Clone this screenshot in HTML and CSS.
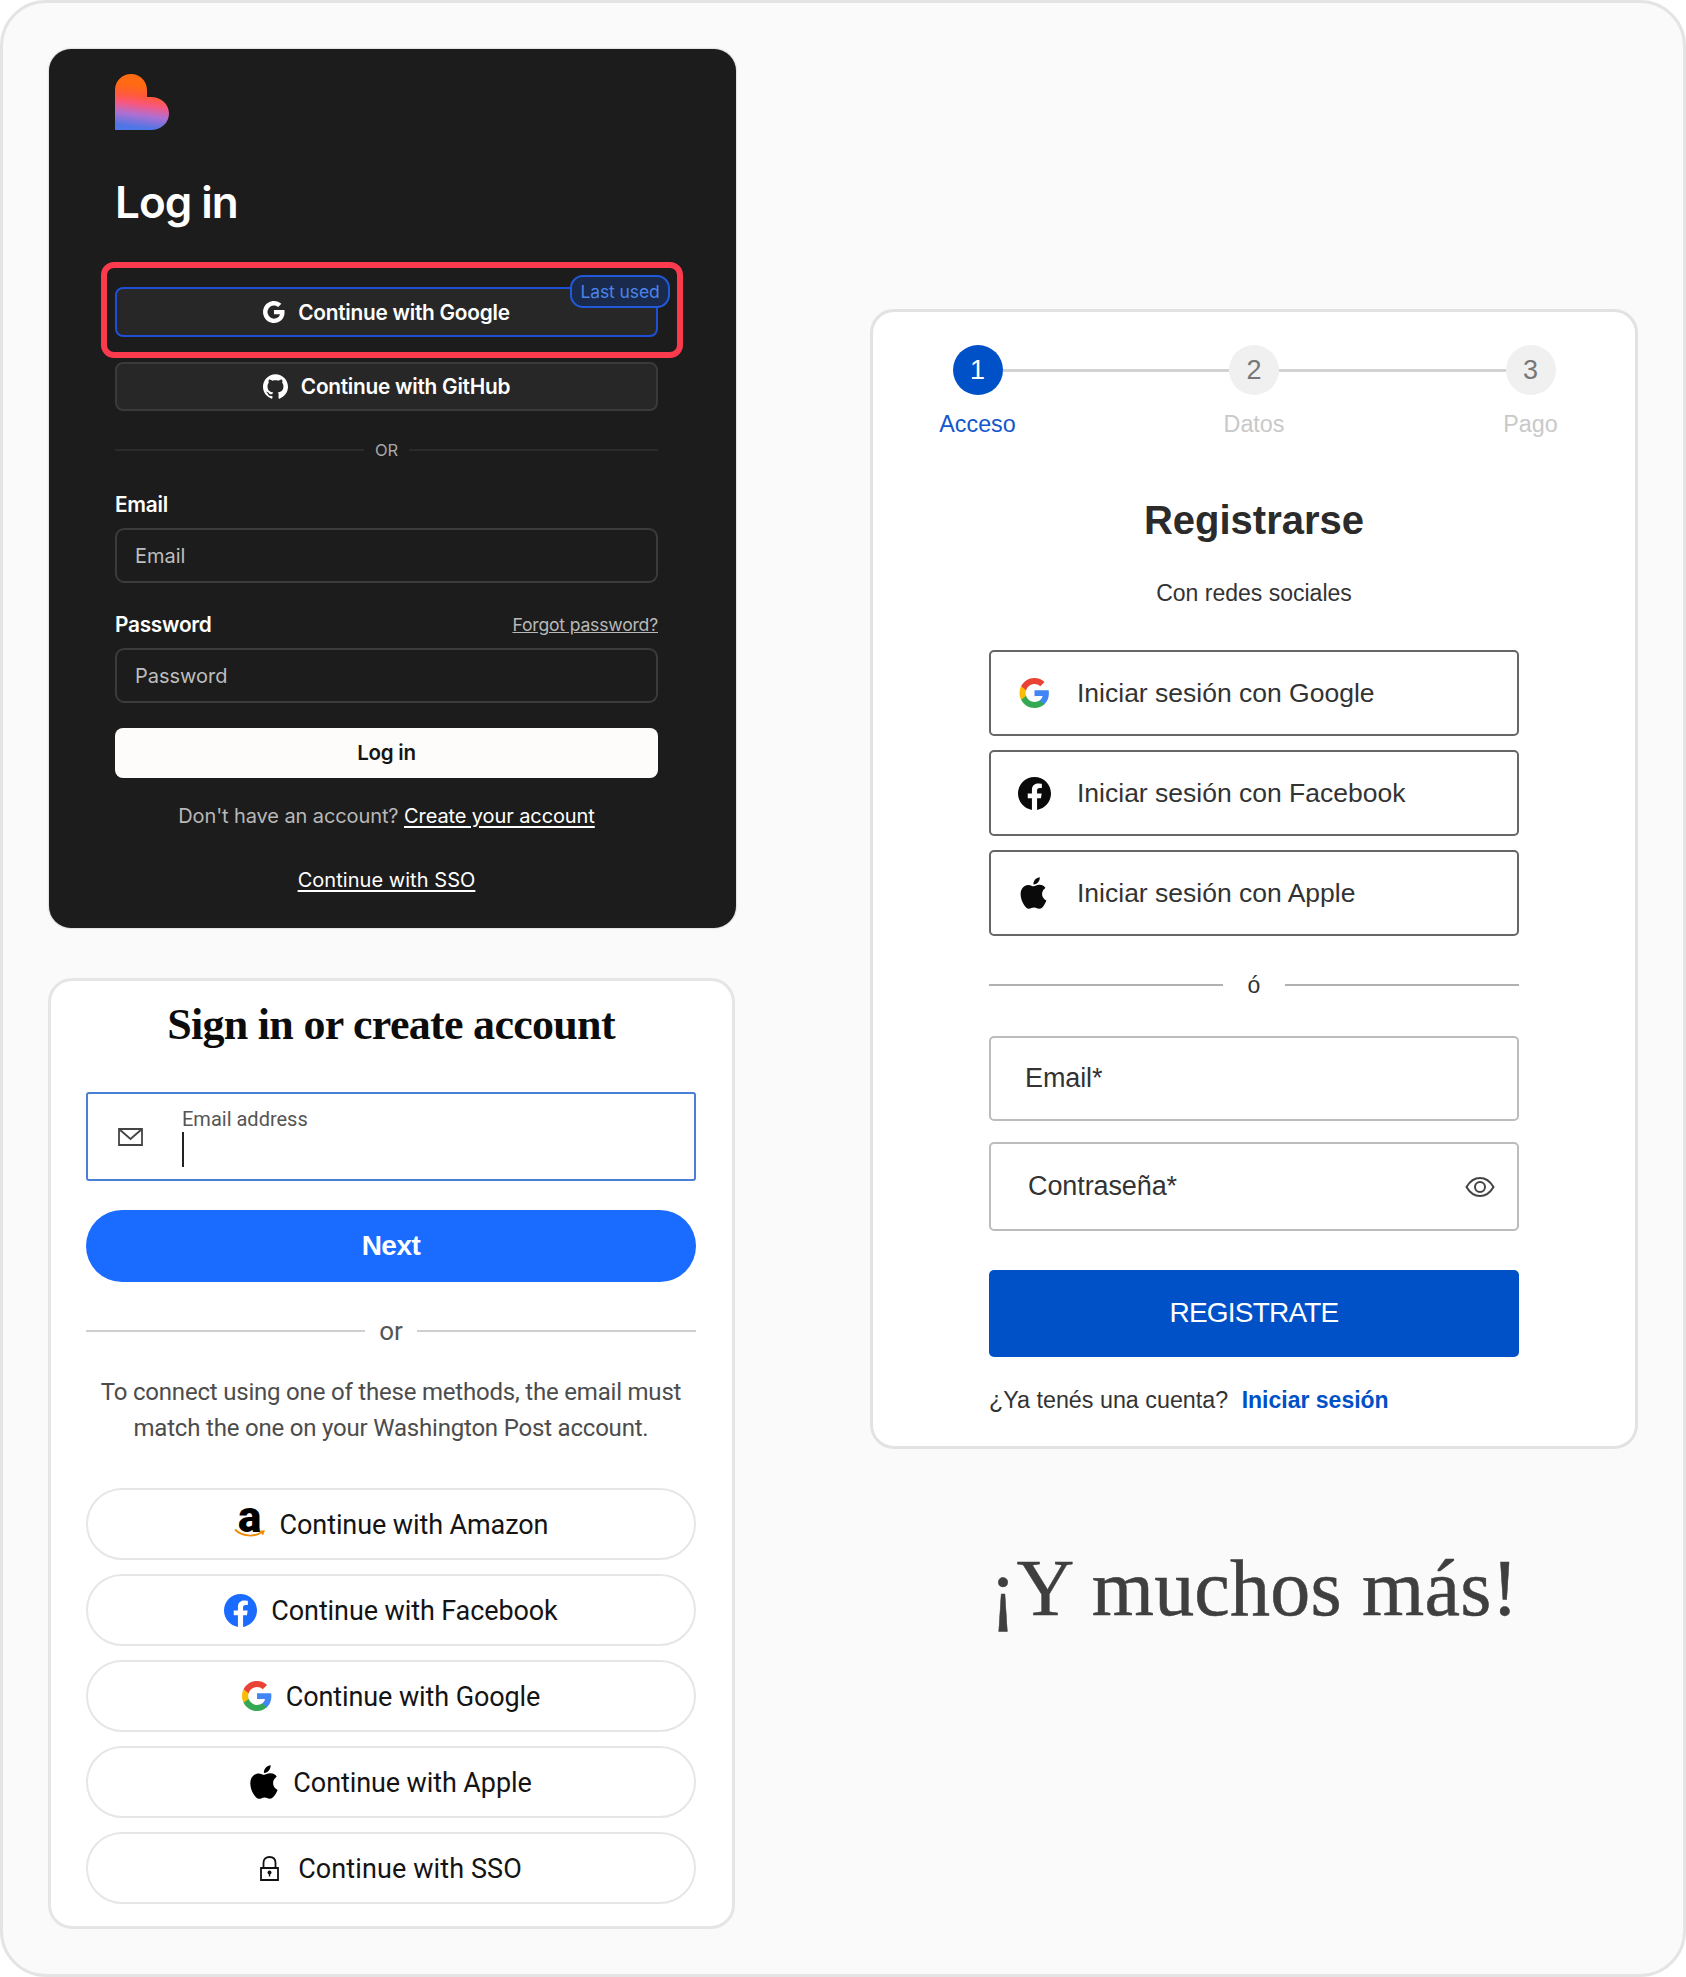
FILE: index.html
```html
<!DOCTYPE html>
<html lang="es">
<head>
<meta charset="utf-8">
<title>Login screens</title>
<link rel="stylesheet" href="styles.css">
</head>
<body>
<svg class="defs" width="0" height="0" aria-hidden="true">
  <defs>
    <linearGradient id="heart" x1="0.56" y1="0.22" x2="0.46" y2="1">
      <stop offset="0" stop-color="#ff6a13"/>
      <stop offset="0.24" stop-color="#ff5a3c"/>
      <stop offset="0.42" stop-color="#f9577e"/>
      <stop offset="0.66" stop-color="#b06fd0"/>
      <stop offset="0.95" stop-color="#4d76e6"/>
    </linearGradient>
    <symbol id="g-color" viewBox="1 1 22 22">
      <path fill="#4285F4" d="M22.56 12.25c0-.78-.07-1.53-.2-2.25H12v4.26h5.92c-.26 1.37-1.04 2.53-2.21 3.31v2.77h3.57c2.08-1.92 3.28-4.74 3.28-8.09z"/>
      <path fill="#34A853" d="M12 23c2.97 0 5.46-.98 7.28-2.66l-3.57-2.77c-.98.66-2.23 1.06-3.71 1.06-2.86 0-5.29-1.93-6.16-4.53H2.18v2.84C3.99 20.53 7.7 23 12 23z"/>
      <path fill="#FBBC05" d="M5.84 14.09c-.22-.66-.35-1.36-.35-2.09s.13-1.43.35-2.09V7.07H2.18C1.43 8.55 1 10.22 1 12s.43 3.45 1.18 4.93l2.85-2.22.81-.62z"/>
      <path fill="#EA4335" d="M12 5.38c1.62 0 3.06.56 4.21 1.64l3.15-3.15C17.45 2.09 14.97 1 12 1 7.7 1 3.99 3.47 2.18 7.07l3.66 2.84c.87-2.6 3.3-4.53 6.16-4.53z"/>
    </symbol>
    <symbol id="fb" viewBox="0 0 24 24">
      <path d="M24 12.073c0-6.627-5.373-12-12-12s-12 5.373-12 12c0 5.99 4.388 10.954 10.125 11.854v-8.385H7.078v-3.47h3.047V9.43c0-3.007 1.792-4.669 4.533-4.669 1.312 0 2.686.235 2.686.235v2.953H15.83c-1.491 0-1.956.925-1.956 1.874v2.25h3.328l-.532 3.47h-2.796v8.385C19.612 23.027 24 18.062 24 12.073z"/>
    </symbol>
    <symbol id="apple" viewBox="3.7 1.9 17.2 20.2">
      <path d="M18.71 19.5c-.83 1.24-1.71 2.45-3.05 2.47-1.34.03-1.77-.79-3.29-.79-1.53 0-2 .77-3.27.82-1.31.05-2.3-1.32-3.14-2.53C4.25 17 2.94 12.45 4.7 9.39c.87-1.52 2.43-2.48 4.12-2.51 1.28-.02 2.5.87 3.29.87.78 0 2.26-1.07 3.81-.91.65.03 2.47.26 3.64 1.98-.09.06-2.17 1.28-2.15 3.81.03 3.02 2.65 4.03 2.68 4.04-.03.07-.42 1.44-1.38 2.83M13 3.5c.73-.83 1.94-1.46 2.94-1.5.13 1.17-.34 2.35-1.04 3.19-.69.85-1.83 1.51-2.95 1.42-.15-1.15.41-2.35 1.05-3.11z"/>
    </symbol>
  </defs>
</svg>

<main class="frame">
  <div class="col-left">
    <section class="card-dark">
      <svg class="heart" viewBox="0 0 54 56" aria-hidden="true">
        <path fill="url(#heart)" d="M0 56V16C0 7 7 0 16 0S32 7 32 16V23H36C46 23 54 30 54 39.500C54 49 46 56 36 56Z"/>
      </svg>
      <h1 class="dark-title">Log in</h1>
      <div class="google-wrap">
        <div class="highlight"></div>
        <button class="dark-btn dark-btn-active">
          <svg class="ico-g-white" viewBox="1 1 22 22" aria-hidden="true"><path d="M22.56 12.25c0-.78-.07-1.53-.2-2.25H12v4.260h5.920c-.26 1.370-1.040 2.530-2.210 3.310v2.770h3.570c2.080-1.920 3.280-4.740 3.280-8.090zM12 23c2.970 0 5.460-.98 7.280-2.660l-3.570-2.770c-.98.660-2.230 1.060-3.710 1.060-2.860 0-5.290-1.930-6.160-4.530H2.180v2.840C3.990 20.530 7.700 23 12 23zM5.840 14.090c-.22-.66-.35-1.360-.35-2.090s.13-1.430.35-2.090V7.070H2.180C1.430 8.550 1 10.220 1 12s.43 3.450 1.180 4.930l2.850-2.220.81-.62zM12 5.380c1.620 0 3.060.56 4.210 1.640l3.150-3.150C17.450 2.090 14.970 1 12 1 7.700 1 3.990 3.470 2.180 7.070l3.660 2.840c.87-2.600 3.300-4.530 6.160-4.530z"/></svg>
          <span>Continue with Google</span>
        </button>
        <span class="badge">Last used</span>
      </div>
      <button class="dark-btn dark-btn-github">
        <svg class="ico-gh" viewBox="0 0 24 24" aria-hidden="true"><path d="M12 .297c-6.630 0-12 5.373-12 12 0 5.303 3.438 9.800 8.205 11.385.6.113.82-.258.82-.577 0-.285-.01-1.040-.015-2.040-3.338.724-4.042-1.610-4.042-1.610C4.422 18.070 3.633 17.700 3.633 17.700c-1.087-.744.084-.729.084-.729 1.205.084 1.838 1.236 1.838 1.236 1.070 1.835 2.809 1.305 3.495.998.108-.776.417-1.305.76-1.605-2.665-.3-5.466-1.332-5.466-5.930 0-1.310.465-2.380 1.235-3.220-.135-.303-.54-1.523.105-3.176 0 0 1.005-.322 3.300 1.230.96-.267 1.980-.399 3-.405 1.020.006 2.040.138 3 .405 2.280-1.552 3.285-1.230 3.285-1.230.645 1.653.24 2.873.12 3.176.765.840 1.230 1.910 1.230 3.220 0 4.610-2.805 5.625-5.475 5.920.42.36.81 1.096.81 2.220 0 1.606-.015 2.896-.015 3.286 0 .315.21.69.825.57C20.565 22.092 24 17.592 24 12.297c0-6.627-5.373-12-12-12"/></svg>
        <span>Continue with GitHub</span>
      </button>
      <div class="dark-or"><span>OR</span></div>
      <label class="dark-label dark-label-email">Email</label>
      <div class="dark-input">Email</div>
      <div class="dark-label-row">
        <label class="dark-label">Password</label>
        <a class="forgot">Forgot password?</a>
      </div>
      <div class="dark-input dark-input-pass">Password</div>
      <button class="dark-login">Log in</button>
      <p class="dark-signup">Don't have an account? <a>Create your account</a></p>
      <p class="dark-sso"><a>Continue with SSO</a></p>
    </section>

    <section class="card-wapo">
      <h2 class="wapo-title">Sign in or create account</h2>
      <div class="wapo-input">
        <svg class="ico-mail" viewBox="0 0 25 18" aria-hidden="true"><path d="M1 1H24V17H1ZM1 1L12.500 11L24 1"/></svg>
        <div class="wapo-field">
          <span class="wapo-field-label">Email address</span>
          <span class="caret"></span>
        </div>
      </div>
      <button class="wapo-next">Next</button>
      <div class="wapo-or"><span>or</span></div>
      <p class="wapo-note">To connect using one of these methods, the email must<br>match the one on your Washington Post account.</p>
      <div class="wapo-list">
        <button class="wapo-btn">
          <span class="amazon">
            <span class="amazon-a">a</span>
            <svg class="amazon-smile" viewBox="0 0 32 12" aria-hidden="true">
              <path d="M1 1.500C8 8.500 20 9.500 28 4" fill="none" stroke="#f08a00" stroke-width="1.800"/>
              <path d="M25.500 2.800L31 2.200L29 7.500Z" fill="#f08a00"/>
            </svg>
          </span>
          <span class="wapo-btn-text">Continue with Amazon</span>
        </button>
        <button class="wapo-btn">
          <svg class="ico-wapo-fb" aria-hidden="true"><use href="#fb"/></svg>
          <span class="wapo-btn-text">Continue with Facebook</span>
        </button>
        <button class="wapo-btn">
          <svg class="ico-wapo-g" aria-hidden="true"><use href="#g-color"/></svg>
          <span class="wapo-btn-text">Continue with Google</span>
        </button>
        <button class="wapo-btn">
          <svg class="ico-wapo-apple" aria-hidden="true"><use href="#apple"/></svg>
          <span class="wapo-btn-text">Continue with Apple</span>
        </button>
        <button class="wapo-btn">
          <svg class="ico-lock" viewBox="0 0 19 25" aria-hidden="true">
            <path class="lock-line" d="M1 12H18V24H1ZM3.500 12V7C3.500 3 6 1 9.500 1S15.500 3 15.500 7V12"/>
            <circle cx="9.500" cy="16.500" r="2"/>
            <path d="M8.800 17H10.200V20.500H8.800Z"/>
          </svg>
          <span class="wapo-btn-text wapo-btn-sso">Continue with SSO</span>
        </button>
      </div>
    </section>
  </div>

  <div class="col-right">
    <section class="card-reg">
      <div class="stepper">
        <div class="step step-on"><span class="step-dot">1</span><span class="step-name">Acceso</span></div>
        <div class="connector"></div>
        <div class="step"><span class="step-dot">2</span><span class="step-name">Datos</span></div>
        <div class="connector"></div>
        <div class="step"><span class="step-dot">3</span><span class="step-name">Pago</span></div>
      </div>
      <h2 class="reg-title">Registrarse</h2>
      <p class="reg-sub">Con redes sociales</p>
      <div class="reg-form">
        <div class="reg-social">
          <button class="reg-btn"><span class="reg-ico"><svg class="ico-reg-g" aria-hidden="true"><use href="#g-color"/></svg></span><span>Iniciar sesión con Google</span></button>
          <button class="reg-btn"><span class="reg-ico"><svg class="ico-reg-fb" aria-hidden="true"><use href="#fb"/></svg></span><span>Iniciar sesión con Facebook</span></button>
          <button class="reg-btn"><span class="reg-ico"><svg class="ico-reg-apple" aria-hidden="true"><use href="#apple"/></svg></span><span>Iniciar sesión con Apple</span></button>
        </div>
        <div class="reg-or"><span>ó</span></div>
        <div class="reg-input reg-input-email">Email*</div>
        <div class="reg-input reg-input-pass">
          <span>Contraseña*</span>
          <svg class="ico-eye" viewBox="0 0 30 22" aria-hidden="true"><path d="M1.500 11C5 5 9.500 2 15 2S25 5 28.500 11C25 17 20.500 20 15 20S5 17 1.500 11Z"/><circle cx="15" cy="11" r="5"/></svg>
        </div>
        <button class="reg-submit">REGISTRATE</button>
        <p class="reg-foot">¿Ya tenés una cuenta? <a>Iniciar sesión</a></p>
      </div>
    </section>
    <p class="more">¡Y muchos más!</p>
  </div>
</main>
</body>
</html>
```

FILE: styles.css
```css
* { box-sizing: border-box; }
html, body { margin: 0; padding: 0; background: #fff; }
button { font: inherit; padding: 0; cursor: pointer; }
p, h1, h2 { margin: 0; }
.defs { position: absolute; }

.frame {
  width: 1686px;
  height: 1977px;
  border: 3px solid #e4e4e4;
  border-radius: 46px;
  background: #fafafa;
  padding: 46px;
  display: flex;
  align-items: flex-start;
}
.col-left { width: 687px; flex: none; display: flex; flex-direction: column; gap: 50px; }
.col-right { width: 768px; flex: none; margin-left: 134px; margin-top: 260px; }

/* Dark card */
.card-dark {
  height: 879px;
  background: #1c1c1c;
  border-radius: 22px;
  padding: 25px 78px 0 66px;
  box-shadow: 0 0 2px rgba(0,0,0,.35);
  font-family: Inter, "Liberation Sans", sans-serif;
  color: #fff;
  letter-spacing: -0.1px;
}
.heart { display: block; width: 54px; height: 56px; }
.dark-title { margin: 44px 0 57px; font-size: 44px; line-height: 56px; font-weight: 600; letter-spacing: -1px; }
.google-wrap { position: relative; }
.highlight { position: absolute; left: -14px; right: -25px; top: -25px; bottom: -21px; border: 6px solid #fb3a4e; border-radius: 13px; }
.badge {
  position: absolute; left: 455px; top: -12px; width: 100px; height: 33px;
  border: 2px solid #2259d8; border-radius: 13px; background: #1a2a4c;
  color: #4a84ea; font-size: 17.500px; line-height: 29px; text-align: center; font-weight: 400;
}
.dark-btn {
  width: 100%; height: 50px; background: #272727; color: #fff;
  border: 2px solid #3a3a3a; border-radius: 8px; display: flex; align-items: center; justify-content: center; gap: 13px;
  font-family: inherit; font-size: 20.800px; font-weight: 600; letter-spacing: -0.25px;
}
.dark-btn-active { border-color: #1d4fd8; }
.dark-btn-github { margin-top: 25px; height: 49px; }
.ico-g-white { width: 22px; height: 22px; fill: #fff; }
.ico-gh { width: 25px; height: 25px; fill: #fff; }
.dark-or { margin-top: 29px; height: 20px; position: relative; display: flex; align-items: center; gap: 11px; color: #a8a8a8; font-size: 16.500px; }
.dark-or::before, .dark-or::after { content: ""; flex: 1; height: 2px; background: #2b2b2b; }
.dark-label { display: block; height: 22px; line-height: 22px; font-size: 20.800px; font-weight: 600; letter-spacing: -0.25px; }
.dark-label-email { margin-top: 34px; }
.dark-input {
  margin-top: 12px; height: 55px; border: 2px solid #3b3b3b; border-radius: 9px; padding-left: 18px;
  display: flex; align-items: center; color: #bdbdbd; font-size: 20px; font-weight: 400; letter-spacing: 0;
}
.dark-label-row { margin-top: 31px; height: 22px; display: flex; justify-content: space-between; align-items: center; }
.forgot { color: #b8b8b8; font-size: 17.600px; line-height: 20px; text-decoration: underline; letter-spacing: -0.2px; }
.dark-login { display: block; width: 100%; margin-top: 25px; height: 50px; border: 0; border-radius: 8px; background: #fdfcfa; color: #151515; font-family: inherit; font-size: 20.500px; font-weight: 600; letter-spacing: -0.25px; padding-bottom: 1px; }
.dark-signup { margin-top: 26px; height: 24px; line-height: 24px; text-align: center; color: #b8b8b8; font-size: 20px; letter-spacing: -0.1px; }
.dark-signup a, .dark-sso a { color: #fff; text-decoration: underline; text-underline-offset: 3px; }
.dark-sso { margin-top: 40px; height: 24px; line-height: 24px; text-align: center; font-size: 20px; letter-spacing: 0.05px; }

/* Washington Post card */
.card-wapo {
  width: 687px; margin-left: -1px; background: #fff;
  border: 3px solid #e5e5e5; border-radius: 24px;
  padding: 14px 36px 22px 35px;
  font-family: Roboto, "Liberation Sans", sans-serif;
  color: #111;
}
.wapo-title { height: 60px; line-height: 60px; text-align: center; font-family: "Liberation Serif", serif; font-weight: 700; font-size: 44px; letter-spacing: -0.7px; white-space: nowrap; color: #0c0c0c; }
.wapo-input { margin-top: 37px; height: 89px; border: 2px solid #4a7fd6; border-radius: 3px; display: flex; align-items: center; padding-left: 30px; }
.ico-mail { width: 25px; height: 18px; fill: none; stroke: #444; stroke-width: 1.800; flex: none; }
.wapo-field { margin-left: 39px; align-self: flex-start; padding-top: 14px; display: flex; flex-direction: column; }
.wapo-field-label { font-size: 20px; line-height: 22px; color: #555; letter-spacing: 0; }
.caret { width: 2px; height: 35px; background: #222; margin-top: 2px; }
.wapo-next { display: block; width: 100%; margin-top: 29px; height: 72px; border: 0; border-radius: 36px; background: #1a6bff; color: #fff; font-family: "Liberation Sans", sans-serif; font-size: 28px; font-weight: 700; letter-spacing: -0.5px; }
.wapo-or { margin-top: 34px; height: 30px; display: flex; align-items: center; gap: 14px; color: #555; font-size: 26px; }
.wapo-or::before, .wapo-or::after { content: ""; flex: 1; height: 2px; background: #cfcfcf; }
.wapo-note { margin-top: 28px; text-align: center; font-size: 24px; line-height: 36px; color: #4c4c4c; white-space: nowrap; letter-spacing: -0.2px; }
.wapo-list { margin-top: 42px; display: flex; flex-direction: column; gap: 14px; }
.wapo-btn { height: 72px; background: #fff; border: 2px solid #e6e6e6; border-radius: 36px; display: flex; align-items: center; justify-content: center; gap: 14px; color: #141414; font-family: inherit; font-size: 27px; letter-spacing: -0.1px; }
.wapo-btn-text { margin-top: 2px; }
.wapo-btn-sso { letter-spacing: 0.1px; }
.amazon { position: relative; display: block; width: 32px; height: 30px; margin-top: -3px; }
.amazon-a { display: block; text-align: center; font-family: Roboto, sans-serif; font-weight: 900; font-size: 44px; line-height: 18px; color: #000; }
.amazon-smile { position: absolute; left: 0; bottom: -2px; width: 32px; height: 12px; }
.ico-wapo-fb { width: 33px; height: 33px; fill: #1a6bff; }
.ico-wapo-g { width: 30px; height: 30px; }
.ico-wapo-apple { width: 29px; height: 34px; fill: #000; }
.ico-lock { width: 19px; height: 25px; fill: #111; margin-right: 5px; }
.lock-line { fill: none; stroke: #111; stroke-width: 1.800; }

/* Registration card */
.card-reg {
  height: 1140px; background: #fff;
  border: 3px solid #e2e2e2; border-radius: 24px;
  padding-top: 33px;
  font-family: "Liberation Sans", sans-serif;
  color: #333;
}
.stepper { width: 653px; margin: 0 auto; display: flex; align-items: flex-start; }
.step { width: 100px; flex: none; display: flex; flex-direction: column; align-items: center; }
.step-dot { width: 50px; height: 50px; border-radius: 50%; background: #f0f0f0; color: #777; display: flex; align-items: center; justify-content: center; font-size: 27px; }
.step-name { margin-top: 16px; height: 26px; line-height: 26px; font-size: 23.300px; color: #c9c9c9; }
.step-on .step-dot { background: #0050c8; color: #fff; }
.step-on .step-name { color: #1456cc; }
.connector { flex: 1; height: 3px; margin: 24px -25px 0; background: #d2d2d2; }
.reg-title { margin-top: 58px; height: 50px; line-height: 50px; text-align: center; font-size: 40px; font-weight: 700; color: #2b2b2b; }
.reg-sub { margin-top: 35px; height: 26px; line-height: 26px; text-align: center; font-size: 23px; }
.reg-form { width: 530px; margin: 44px auto 0; }
.reg-social { display: flex; flex-direction: column; gap: 14px; }
.reg-btn { height: 86px; background: #fff; border: 2.500px solid #666; border-radius: 5px; display: flex; align-items: center; font-family: inherit; font-size: 26.500px; color: #333; }
.reg-ico { width: 86px; flex: none; display: flex; justify-content: center; }
.ico-reg-g { width: 31px; height: 30px; }
.ico-reg-fb { width: 33px; height: 33px; fill: #0a0a0a; }
.ico-reg-apple { width: 28px; height: 32px; fill: #0a0a0a; }
.reg-or { margin-top: 34px; height: 30px; display: flex; align-items: center; gap: 25px; font-size: 23px; color: #333; }
.reg-or::before, .reg-or::after { content: ""; flex: 1; height: 2px; background: #b0b0b0; }
.reg-input { border: 2px solid #bcbcbc; border-radius: 5px; background: #fff; display: flex; align-items: center; font-size: 27px; color: #333; letter-spacing: -0.1px; }
.reg-input-email { margin-top: 36px; height: 85px; padding-left: 34px; }
.reg-input-pass { margin-top: 21px; height: 89px; padding: 0 22px 0 37px; justify-content: space-between; }
.ico-eye { width: 30px; height: 22px; fill: none; stroke: #444; stroke-width: 2; }
.reg-submit { display: block; width: 100%; margin-top: 39px; height: 87px; border: 0; border-radius: 5px; background: #0050c8; color: #fff; font-family: inherit; font-size: 28px; letter-spacing: -0.8px; padding-bottom: 2px; }
.reg-foot { margin-top: 30px; height: 26px; line-height: 26px; font-size: 23.300px; white-space: nowrap; }
.reg-foot a { margin-left: 7px; color: #0050c8; font-weight: 700; font-size: 23px; }
.more { margin-top: 94px; text-align: center; font-family: "Liberation Serif", serif; font-size: 80px; line-height: 90px; color: #3f3f3f; white-space: nowrap; letter-spacing: 0.2px; -webkit-text-stroke: 0.5px #3f3f3f; }
```
